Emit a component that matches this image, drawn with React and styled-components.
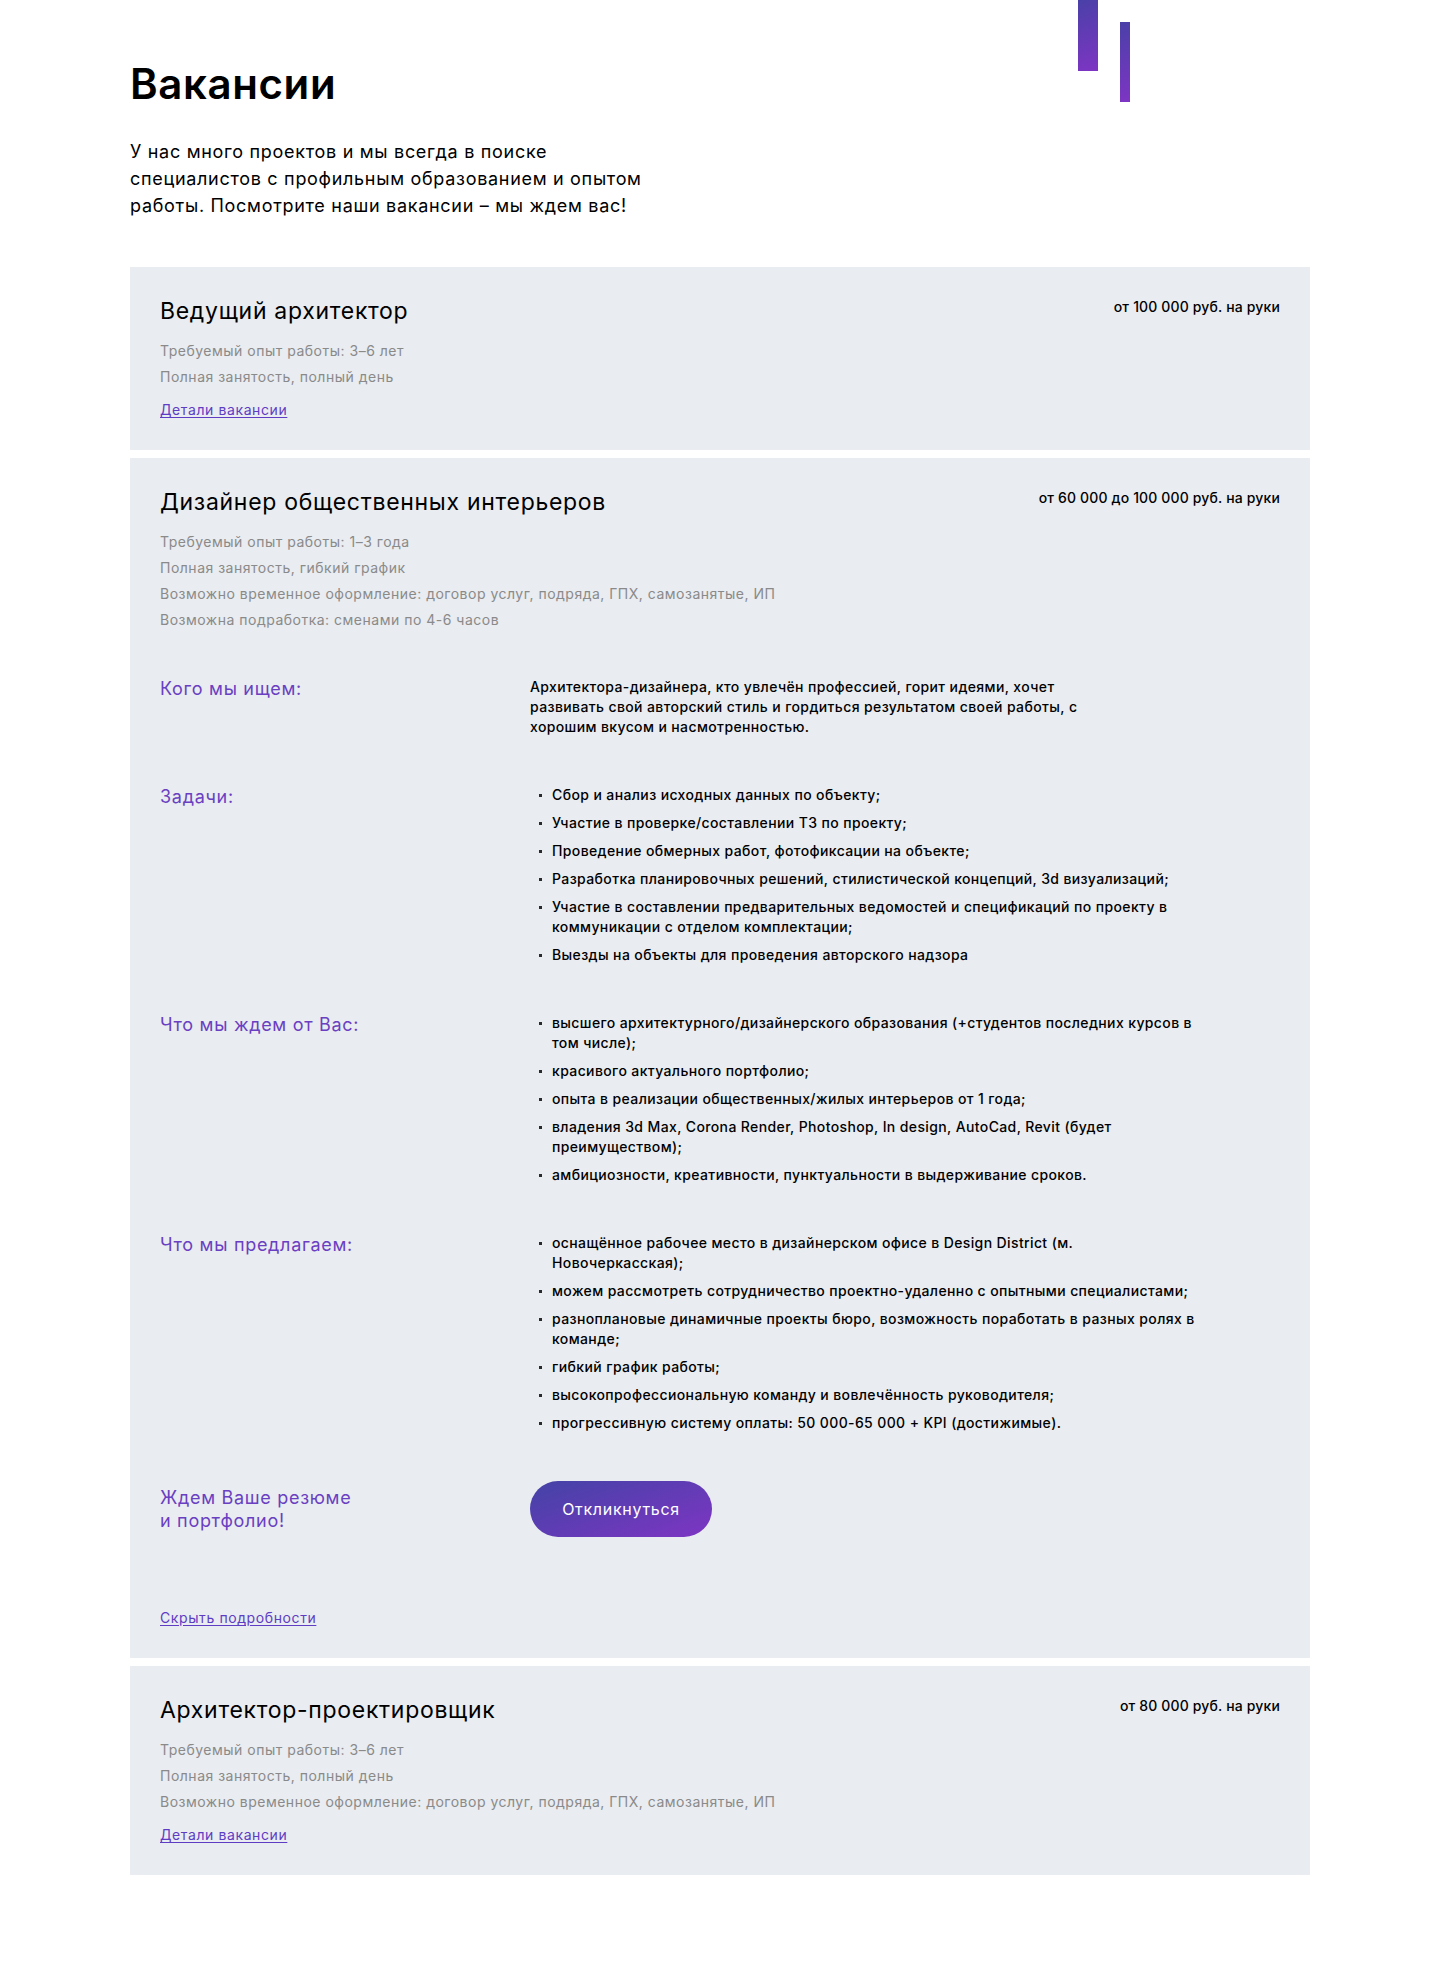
import React from "react";
import styled, { createGlobalStyle } from "styled-components";

const GlobalStyle = createGlobalStyle`
  html, body { margin: 0; padding: 0; background: #ffffff; }
  body {
    font-family: "Inter", "Open Sans", "Liberation Sans", sans-serif;
    color: #000;
    -webkit-font-smoothing: antialiased;
  }
  * { box-sizing: border-box; }
`;

const Page = styled.main`
  position: relative;
  width: 1180px;
  margin: 0 auto;
  padding: 59px 0 100px;
`;

const Bar = styled.span`
  position: absolute;
  left: ${(p) => p.$left}px;
  top: ${(p) => p.$top}px;
  width: ${(p) => p.$w}px;
  height: ${(p) => p.$h}px;
  background: linear-gradient(160deg, #4a40a8 0%, #7e35c3 100%);
`;

const Title = styled.h1`
  margin: 0;
  font-size: 42px;
  line-height: 49px;
  font-weight: 600;
  letter-spacing: 0.6px;
`;

const Intro = styled.p`
  margin: 30px 0 48px;
  font-size: 18px;
  line-height: 27px;
  font-weight: 400;
  letter-spacing: 0.7px;
`;

const List = styled.div`
  display: flex;
  flex-direction: column;
  gap: 8px;
`;

const Card = styled.section`
  background: #e9ecf0;
  padding: 30px;
`;

const CardHead = styled.div`
  display: flex;
  justify-content: space-between;
  align-items: flex-start;
`;

const JobTitle = styled.h2`
  margin: 0;
  font-size: 23px;
  line-height: 28px;
  font-weight: 400;
  letter-spacing: 0.7px;
`;

const Salary = styled.div`
  font-size: 14px;
  line-height: 20px;
  font-weight: 500;
  letter-spacing: 0.15px;
  white-space: nowrap;
`;

const Meta = styled.div`
  margin-top: 13px;
  display: flex;
  flex-direction: column;
`;

const MetaLine = styled.div`
  font-size: 14px;
  line-height: 26px;
  letter-spacing: 0.5px;
  color: #8a8a8a;
`;

const TextLink = styled.a`
  display: inline-block;
  margin-top: ${(p) => p.$mt || 10}px;
  font-size: 14px;
  line-height: 20px;
  letter-spacing: 0.6px;
  color: #5e3cc4;
  text-decoration: underline;
  text-underline-offset: 2px;
  cursor: pointer;
`;

const Details = styled.div`
  margin-top: 44px;
  display: flex;
  flex-direction: column;
  gap: 48px;
`;

const Row = styled.div`
  display: grid;
  grid-template-columns: 370px 1fr;
  align-items: ${(p) => (p.$center ? "center" : "start")};
`;

const Label = styled.div`
  font-size: 18px;
  line-height: 23px;
  letter-spacing: 0.7px;
  color: #6a3fc2;
`;

const Desc = styled.p`
  margin: 0;
  max-width: 575px;
  font-size: 14px;
  line-height: 20px;
  font-weight: 500;
  letter-spacing: 0.38px;
`;

const Bullets = styled.ul`
  margin: 0;
  padding: 0 0 0 22px;
  list-style: none;
  max-width: 677px;
  display: flex;
  flex-direction: column;
  gap: 8px;
`;

const Item = styled.li`
  position: relative;
  font-size: 14px;
  line-height: 20px;
  font-weight: 500;
  letter-spacing: 0.38px;
  &::before {
    content: "";
    position: absolute;
    left: -13px;
    top: 9px;
    width: 3px;
    height: 3px;
    background: #2a2a2a;
  }
`;

const Button = styled.button`
  width: 182px;
  height: 56px;
  border: 0;
  border-radius: 28px;
  background: linear-gradient(160deg, #4343a6 0%, #7e35c3 100%);
  color: #fff;
  font-family: inherit;
  font-size: 16px;
  letter-spacing: 0.7px;
  cursor: pointer;
`;

const vacancies = [
  {
    title: "Ведущий архитектор",
    salary: "от 100 000 руб. на руки",
    meta: ["Требуемый опыт работы: 3–6 лет", "Полная занятость, полный день"],
  },
  {
    title: "Дизайнер общественных интерьеров",
    salary: "от 60 000 до 100 000 руб. на руки",
    meta: [
      "Требуемый опыт работы: 1–3 года",
      "Полная занятость, гибкий график",
      "Возможно временное оформление: договор услуг, подряда, ГПХ, самозанятые, ИП",
      "Возможна подработка: сменами по 4-6 часов",
    ],
    open: true,
  },
  {
    title: "Архитектор-проектировщик",
    salary: "от 80 000 руб. на руки",
    meta: [
      "Требуемый опыт работы: 3–6 лет",
      "Полная занятость, полный день",
      "Возможно временное оформление: договор услуг, подряда, ГПХ, самозанятые, ИП",
    ],
  },
];

const sections = [
  {
    label: "Задачи:",
    items: [
      "Сбор и анализ исходных данных по объекту;",
      "Участие в проверке/составлении ТЗ по проекту;",
      "Проведение обмерных работ, фотофиксации на объекте;",
      "Разработка планировочных решений, стилистической концепций, 3d визуализаций;",
      "Участие в составлении предварительных ведомостей и спецификаций по проекту в коммуникации с отделом комплектации;",
      "Выезды на объекты для проведения авторского надзора",
    ],
  },
  {
    label: "Что мы ждем от Вас:",
    items: [
      "высшего архитектурного/дизайнерского образования (+студентов последних курсов в том числе);",
      "красивого актуального портфолио;",
      "опыта в реализации общественных/жилых интерьеров от 1 года;",
      "владения 3d Max, Corona Render, Photoshop, In design, AutoCad, Revit (будет преимуществом);",
      "амбициозности, креативности, пунктуальности в выдерживание сроков.",
    ],
  },
  {
    label: "Что мы предлагаем:",
    items: [
      "оснащённое рабочее место в дизайнерском офисе в Design District (м. Новочеркасская);",
      "можем рассмотреть сотрудничество проектно-удаленно с опытными специалистами;",
      "разноплановые динамичные проекты бюро, возможность поработать в разных ролях в команде;",
      "гибкий график работы;",
      "высокопрофессиональную команду и вовлечённость руководителя;",
      "прогрессивную систему оплаты: 50 000-65 000 + KPI (достижимые).",
    ],
  },
];

function OpenDetails() {
  return (
    <>
      <Details>
        <Row>
          <Label>Кого мы ищем:</Label>
          <Desc>
            Архитектора-дизайнера, кто увлечён профессией, горит идеями, хочет
            развивать свой авторский стиль и гордиться результатом своей работы, с
            хорошим вкусом и насмотренностью.
          </Desc>
        </Row>
        {sections.map((s) => (
          <Row key={s.label}>
            <Label>{s.label}</Label>
            <Bullets>
              {s.items.map((it) => (
                <Item key={it}>{it}</Item>
              ))}
            </Bullets>
          </Row>
        ))}
        <Row $center>
          <Label>
            Ждем Ваше резюме
            <br />и портфолио!
          </Label>
          <div>
            <Button>Откликнуться</Button>
          </div>
        </Row>
      </Details>
      <TextLink $mt={71}>Скрыть подробности</TextLink>
    </>
  );
}

export default function App() {
  return (
    <>
      <GlobalStyle />
      <Page>
        <Bar $left={948} $top={0} $w={20} $h={71} />
        <Bar $left={990} $top={22} $w={10} $h={80} />
        <Title>Вакансии</Title>
        <Intro>
          У нас много проектов и мы всегда в поиске
          <br />
          специалистов с профильным образованием и опытом
          <br />
          работы. Посмотрите наши вакансии – мы ждем вас!
        </Intro>
        <List>
          {vacancies.map((v) => (
            <Card key={v.title}>
              <CardHead>
                <JobTitle>{v.title}</JobTitle>
                <Salary>{v.salary}</Salary>
              </CardHead>
              <Meta>
                {v.meta.map((m) => (
                  <MetaLine key={m}>{m}</MetaLine>
                ))}
              </Meta>
              {v.open ? (
                <OpenDetails />
              ) : (
                <div>
                  <TextLink>Детали вакансии</TextLink>
                </div>
              )}
            </Card>
          ))}
        </List>
      </Page>
    </>
  );
}
